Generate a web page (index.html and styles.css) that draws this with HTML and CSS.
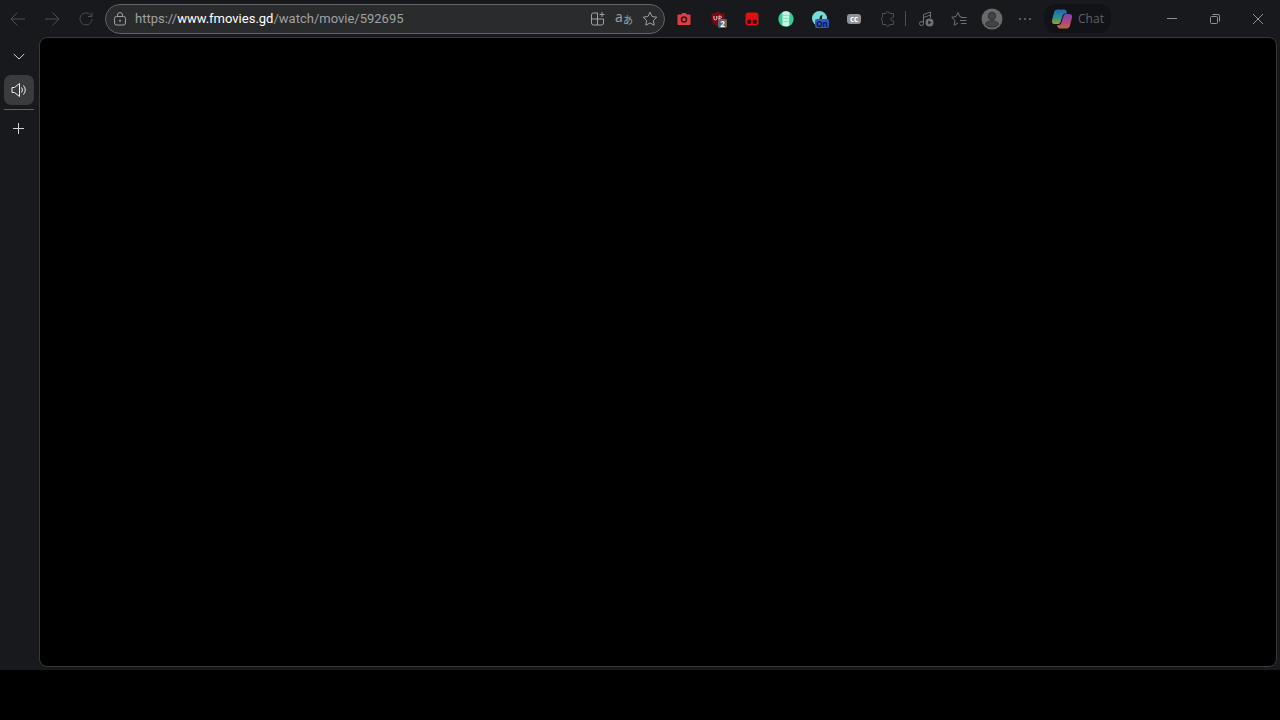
FILE: index.html
```html
<!DOCTYPE html>
<html lang="en">
<head>
<meta charset="utf-8">
<meta name="viewport" content="width=device-width, initial-scale=1">
<title>fmovies.gd</title>
<link rel="stylesheet" href="styles.css">
</head>
<body>
<div class="browser">
  <header class="toolbar">
    <nav class="group" aria-label="Navigation">
      <button class="tool dim" aria-label="Back"><svg width="16" height="16" viewBox="0 0 16 16"><path d="M15 8H1M7.500 1.500 1 8l6.500 6.500"/></svg></button>
      <button class="tool dim" aria-label="Forward"><svg width="16" height="16" viewBox="0 0 16 16"><path d="M1 8h14M8.500 1.500 15 8l-6.500 6.500"/></svg></button>
      <button class="tool dim" aria-label="Refresh"><svg width="16" height="16" viewBox="0 0 16 16"><path d="M13.500 5.500A6 6 0 1 0 14 8M14 1.500v4h-4"/></svg></button>
    </nav>
    <div class="address">
      <button class="inner" aria-label="Site information"><svg width="16" height="16" viewBox="0 0 16 16"><rect x="2.500" y="5.500" width="11" height="8.500" rx="2"/><path d="M5.500 5.500V4a2.500 2.500 0 0 1 5 0v1.500"/><circle class="solid" cx="8" cy="9.800" r="1"/></svg></button>
      <div class="url" role="textbox" contenteditable="true" spellcheck="false" aria-label="Address">https://<span class="domain">www.fmovies.gd</span>/watch/movie/592695</div>
      <button class="inner" aria-label="Install app"><svg width="16" height="16" viewBox="0 0 16 16"><path d="M8 2H3.500A2 2 0 0 0 1.500 4v8a2 2 0 0 0 2 2h8a2 2 0 0 0 2-2V8H1.500M7.500 2v12M12 1v5M9.500 3.500h5"/></svg></button>
      <button class="inner" aria-label="Translate"><span class="latin">a</span><span class="kana">あ</span></button>
      <button class="inner" aria-label="Add to favorites"><svg width="16" height="16" viewBox="0 0 16 16"><path d="m8 1.200 2.100 4.300 4.700.7-3.400 3.300.8 4.700L8 12l-4.200 2.200.8-4.700L1.200 6.200l4.700-.7z"/></svg></button>
    </div>
    <div class="group" aria-label="Extensions">
      <button class="tool" aria-label="Screenshot"><svg width="14" height="14" viewBox="0 0 14 14"><path class="camera" d="M1.500 2.500H4L5.500 1h3L10 2.500h2.500a1 1 0 0 1 1 1V12a1 1 0 0 1-1 1h-11a1 1 0 0 1-1-1V3.500a1 1 0 0 1 1-1z"/><circle class="lens" cx="7" cy="7.500" r="2.500"/></svg></button>
      <button class="tool" aria-label="Content blocker, 2 blocked"><svg width="16" height="16" viewBox="0 0 16 16"><path class="shield" d="M8 .5c2 1.200 4 1.800 6.500 1.800v5c0 4-2.500 6.500-6.500 8.200C4 13.800 1.500 11.300 1.500 7.300v-5C4 2.300 6 1.700 8 .5z"/><path class="mark" d="M4 5v2.500a1.400 1.400 0 0 0 2.800 0V5M9 9.500V5h1.500q2.500 2-1.500 2.500"/></svg><span class="badge count">2</span></button>
      <button class="tool" aria-label="Userscripts"><svg width="14" height="14" viewBox="0 0 14 14"><rect class="red" x=".5" y=".5" width="13" height="13" rx="3"/><circle class="hole" cx="4.300" cy="9.700" r="2.200"/><circle class="hole" cx="9.700" cy="9.700" r="2.200"/></svg></button>
      <button class="tool" aria-label="Notes"><svg width="16" height="16" viewBox="0 0 16 16"><circle class="mint" cx="8" cy="8" r="7.700"/><path class="page" d="M4.500 1.200Q8-.5 11.500 1.200L11 14.800q-3.500 1.200-6.500-.3z"/><path class="rule" d="M5 4.500h5.500M5 7.500h5.500M5 10.500h5.500"/></svg></button>
      <button class="tool" aria-label="Dark theme, on"><svg width="16" height="16" viewBox="0 0 16 16"><circle class="aqua" cx="7.500" cy="7.500" r="7.500"/><path class="moon" d="M10.500 4c-2.500.3-3.500 2.500-3 6h2.500V6.500z"/></svg><span class="badge state">On</span></button>
      <button class="tool" aria-label="Captions"><span class="captions">cc</span></button>
      <button class="tool dim" aria-label="Extensions"><svg width="16" height="16" viewBox="0 0 16 16"><path d="M2.500 2.500H6a1.800 1.800 0 0 1 3.600 0h3.900v3.800h-1a1.700 1.700 0 0 0 0 3.400h1v3.800H9.600a1.800 1.800 0 0 1-3.600 0H2.500V9.700a1.800 1.800 0 0 1 0-3.400z"/></svg></button>
    </div>
    <span class="divider"></span>
    <div class="group">
      <button class="tool slim" aria-label="Media controls"><svg width="16" height="16" viewBox="0 0 16 16"><path d="M5.500 12V3.500L12.500 1v6M5.500 6.500l7-2.500"/><circle cx="3.500" cy="12.500" r="2"/><circle class="disc" cx="11.500" cy="11.500" r="4"/><path class="play" d="m10.300 9.500 3.200 2-3.200 2z"/></svg></button>
      <button class="tool slim" aria-label="Favorites"><svg width="16" height="16" viewBox="0 0 16 16"><path d="M10.500 6 8.800 5.600 7 1.500 5 5.600l-4.300.7L4 9.500l-.8 4.700L7 12M10 6.500h5.500M9 9.500h6.500M10 12.500h5.500"/></svg></button>
      <button class="tool slim" aria-label="Profile"><svg width="22" height="22" viewBox="0 0 22 22"><circle class="profile" cx="11" cy="11" r="10.500"/><circle class="person" cx="11" cy="8" r="3.800"/><path class="person" d="M4.500 16.500c0-5 13-5 13 0-2.500 3.500-10.500 3.500-13 0z"/></svg></button>
      <button class="tool slim" aria-label="Settings and more"><svg width="14" height="14" viewBox="0 0 14 14"><circle class="solid" cx="2" cy="7" r="1"/><circle class="solid" cx="7" cy="7" r="1"/><circle class="solid" cx="12" cy="7" r="1"/></svg></button>
    </div>
    <button class="chat"><svg width="22" height="20" viewBox="0 0 22 20" aria-hidden="true">
      <defs>
        <linearGradient id="cool" x1="0" y1="0" x2="0" y2="1"><stop offset="0" stop-color="#2266ae"/><stop offset=".55" stop-color="#25938f"/><stop offset="1" stop-color="#a39a32"/></linearGradient>
        <linearGradient id="warm" x1="0" y1="0" x2="0" y2="1"><stop offset="0" stop-color="#7046b0"/><stop offset=".55" stop-color="#b44386"/><stop offset="1" stop-color="#b96838"/></linearGradient>
      </defs>
      <path class="cool" d="M6.500.5H13c2 0 2.500 1.500 3 4h-2c-1.500 0-2 1-2.500 2.500L9.500 13c-.5 1.500-1.500 2-3 2H3.500c-2.500 0-3-2-2.400-4L3 3.500C3.600 1.500 4.500.5 6.500.5z"/>
      <path class="warm" d="M15.500 19.500H9c-2 0-2.500-1.500-3-3.500h2c1.500 0 2-1 2.500-2.500l2-6.500c.5-1.500 1.500-2 3-2h3c2.500 0 3 2 2.400 4L19 16.500c-.6 2-1.500 3-3.500 3z"/></svg><span>Chat</span></button>
    <div class="group captionbar">
      <button class="window-button" aria-label="Minimize"><svg width="10" height="10" viewBox="0 0 10 10"><path d="M0 4.500h10"/></svg></button>
      <button class="window-button" aria-label="Restore"><svg width="10" height="10" viewBox="0 0 10 10"><rect x=".5" y="2.500" width="7" height="7" rx="1"/><path d="M2.500.5H8A1.500 1.500 0 0 1 9.500 2v5.500"/></svg></button>
      <button class="window-button" aria-label="Close"><svg width="10" height="10" viewBox="0 0 10 10"><path d="m0 0 10 10M10 0 0 10"/></svg></button>
    </div>
  </header>
  <div class="workspace">
    <aside class="tabs" aria-label="Vertical tabs">
      <button class="tab" aria-label="Tab actions"><svg width="12" height="12" viewBox="0 0 12 12"><path d="m.8 4 5.200 5 5.200-5"/></svg></button>
      <button class="tab current" aria-label="Current tab, playing audio"><svg width="16" height="16" viewBox="0 0 16 16"><path d="M1 5.500h2.500L8.500 1.500v13l-5-4H1zM10.500 5.500q2 2.500 0 5M12.500 3.500q3.500 4.500 0 9"/></svg></button>
      <span class="rule-line"></span>
      <button class="tab" aria-label="New tab"><svg width="12" height="12" viewBox="0 0 12 12"><path d="M5.500 0v11M0 5.500h11"/></svg></button>
    </aside>
    <main class="page-view" aria-label="Page content"></main>
  </div>
</div>
</body>
</html>
```
FILE: styles.css
```css
* {
  box-sizing: border-box;
}

body {
  min-height: 100vh;
  margin: 0;
  padding-bottom: 50px;
  display: flex;
  background: #000;
  color: #a0a1a3;
  font-family: "Open Sans", "Noto Sans CJK JP", sans-serif;
  font-size: 13px;
}

button {
  display: flex;
  align-items: center;
  justify-content: center;
  padding: 0;
  border: 0;
  background: none;
  color: inherit;
  font: inherit;
}

svg {
  display: block;
  flex: none;
  fill: none;
  stroke: currentColor;
  stroke-width: 1;
}

.browser {
  flex: 1;
  display: flex;
  flex-direction: column;
  background: #17191c;
}

.toolbar {
  display: flex;
  align-items: center;
  height: 37px;
}

.group {
  display: flex;
}

.tool {
  position: relative;
  width: 34px;
  height: 30px;
  color: #707174;
}

.slim {
  width: 33px;
}

.dim {
  color: #4c4e51;
}

.toolbar > nav {
  padding: 0 2px 0 1px;
}

.address {
  flex: 1;
  min-width: 0;
  height: 30px;
  padding: 0 3px;
  display: flex;
  align-items: center;
  border: 1px solid #626466;
  border-radius: 15px;
  background: #2a2b2d;
  margin-right: 2px;
}

.inner {
  width: 22px;
  height: 26px;
  color: #a0a1a3;
}

.inner + .inner {
  margin-left: 4px;
}

.url {
  flex: 1;
  min-width: 0;
  padding: 0 4px;
  overflow: hidden;
  white-space: nowrap;
  font-family: Roboto, sans-serif;
  line-height: 20px;
  outline: 0;
}

.domain {
  color: #fff;
}

.latin {
  font-size: 14px;
  line-height: 18px;
  padding-bottom: 4px;
}

.kana {
  font-size: 10px;
  line-height: 12px;
  padding-top: 3px;
}

.solid {
  fill: currentColor;
  stroke: none;
}

.camera {
  fill: #e23d43;
  stroke: none;
}

.lens {
  stroke: #24191c;
  stroke-width: 1.5;
}

.shield {
  fill: #7c0714;
  stroke: none;
}

.mark {
  stroke: #e6d5d8;
}

.badge {
  position: absolute;
  left: 17px;
  top: 15px;
  border-radius: 2px;
  color: #fff;
  font-size: 8px;
  line-height: 9px;
  font-weight: 700;
}

.count {
  width: 9px;
  background: #626765;
}

.state {
  left: 12px;
  width: 14px;
  background: #3158c8;
  color: #0b142e;
}

.red {
  fill: #e01010;
  stroke: none;
}

.hole {
  fill: #3c090a;
  stroke: none;
}

.mint {
  fill: #38c995;
  stroke: none;
}

.page {
  fill: #c5f3e1;
  stroke: none;
}

.rule {
  stroke: #86dfc0;
}

.aqua {
  fill: #79dbd8;
  stroke: none;
}

.moon {
  fill: #10232b;
  stroke: none;
}

.captions {
  width: 14px;
  border-radius: 3px;
  background: #919294;
  color: #fff;
  font-size: 8px;
  font-weight: 700;
  line-height: 10px;
}

.divider {
  width: 1px;
  height: 15px;
  margin-right: 3px;
  background: #4c4e50;
}

.disc {
  fill: #707174;
  stroke: none;
}

.play {
  fill: #17191c;
  stroke: none;
}

.profile {
  fill: #69696a;
  stroke: none;
}

.person {
  fill: #434445;
  stroke: #303132;
}

.chat {
  width: 67px;
  height: 29px;
  margin-left: 3px;
  gap: 5px;
  border-radius: 12px;
  background: #121316;
  color: #606164;
  font-size: 12px;
}

.cool {
  fill: url(#cool);
  stroke: none;
}

.warm {
  fill: url(#warm);
  stroke: none;
}

.captionbar {
  margin: 0 1px 0 39px;
}

.window-button {
  width: 43px;
  height: 30px;
  color: #909194;
}

.workspace {
  flex: 1;
  display: flex;
  padding: 0 3px 3px 0;
}

.tabs {
  width: 39px;
  padding: 4px 4px 0;
  display: flex;
  flex-direction: column;
  align-items: flex-start;
  gap: 4px;
}

.tab {
  width: 30px;
  height: 30px;
  color: #d2d3d4;
}

.current {
  border-radius: 7px;
  background: #3a3b3d;
  color: #f0f0f0;
}

.rule-line {
  width: 30px;
  height: 1px;
  background: #606163;
}

.page-view {
  flex: 1;
  border: 1px solid #39393b;
  border-radius: 8px;
  background: #000;
}
```
